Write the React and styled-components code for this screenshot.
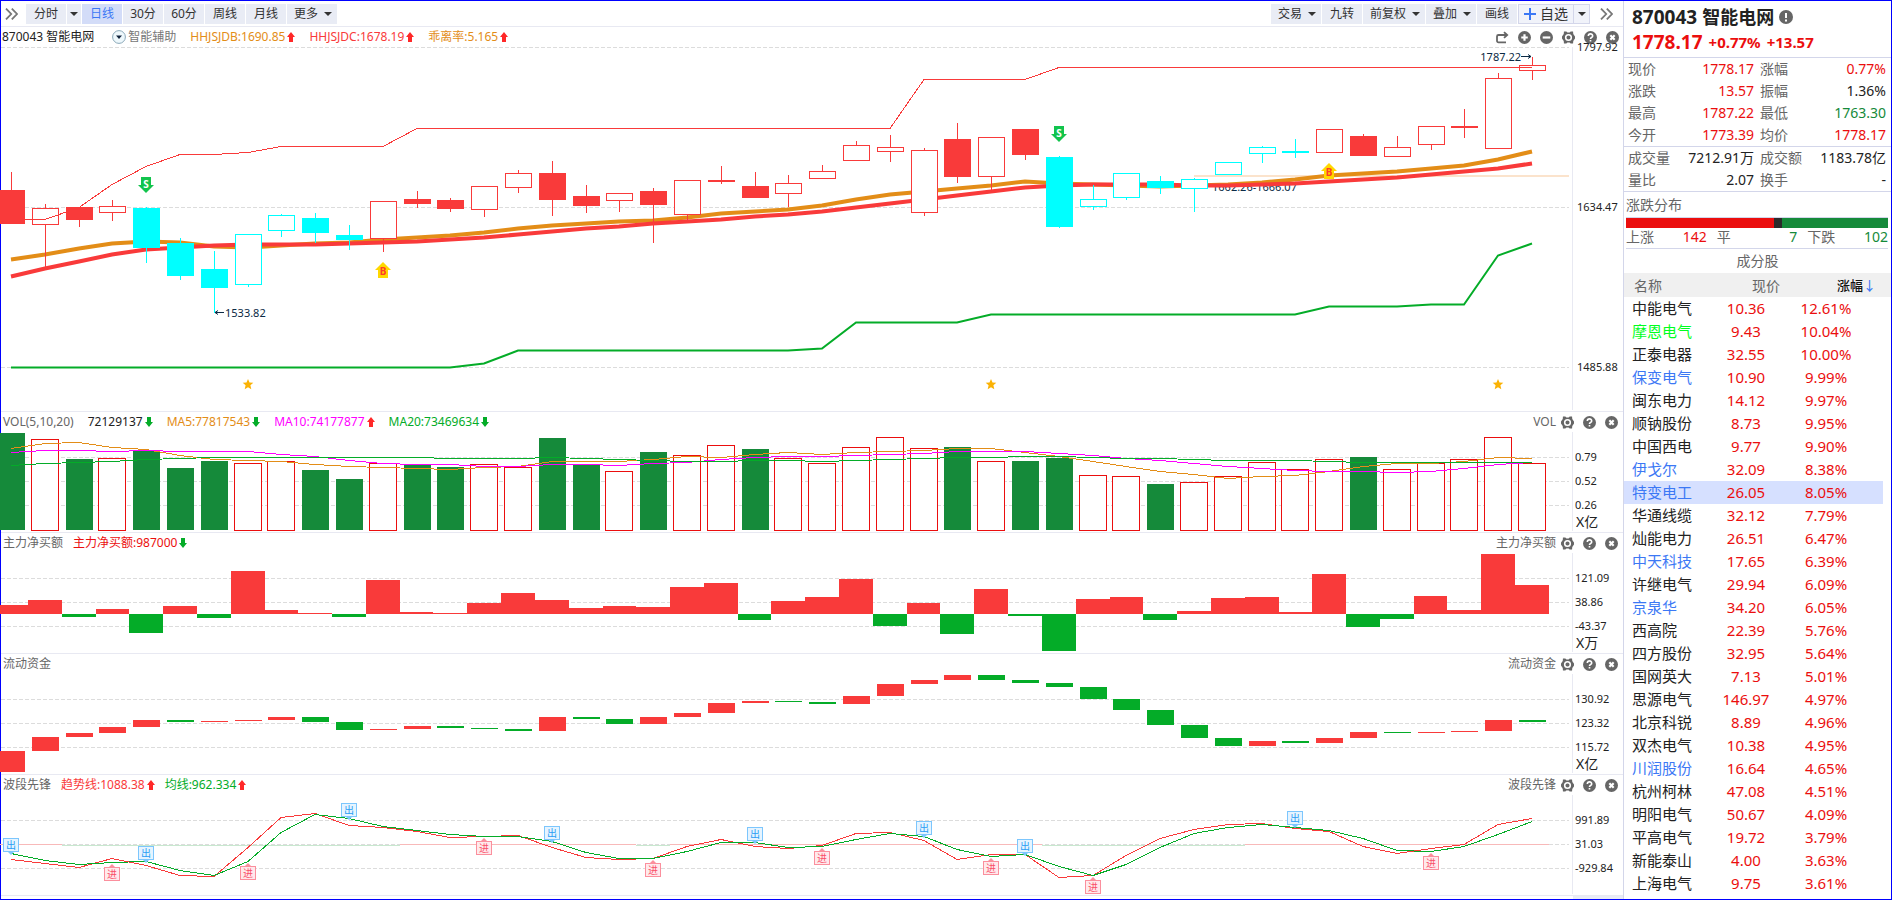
import React, { useLayoutEffect, useRef, useState } from 'react';
import styled, { createGlobalStyle } from 'styled-components';

const RED = '#f93a3a';
const DEEP_RED = '#eb0e0e';
const GREEN = '#04ac28';
const DEEP_GREEN = '#158a3a';
const CYAN = '#00ffff';
const ORANGE = '#e38d17';
const MAGENTA = '#ff00ff';
const AXIS_SPACE = 51;
const FIRST_X = 10;

// [kind, body top, body bottom, high, low], r = red, c = cyan, capital = filled body
const candles = [
  ['R', 190, 224, 172, 224], ['r', 208, 225, 204, 267], ['R', 207, 220, 207, 227],
  ['r', 206, 213, 200, 221], ['C', 208, 248, 207, 263], ['C', 243, 276, 238, 280],
  ['C', 269, 288, 251, 313], ['c', 234, 285, 234, 287], ['c', 215, 231, 214, 237],
  ['C', 218, 233, 213, 243], ['C', 235, 240, 225, 250], ['r', 201, 239, 201, 252],
  ['R', 199, 204, 191, 208], ['R', 200, 209, 198, 212], ['r', 186, 210, 186, 217],
  ['r', 173, 188, 170, 193], ['R', 173, 200, 161, 216], ['R', 196, 206, 185, 213],
  ['r', 193, 201, 193, 212], ['R', 191, 205, 188, 243], ['r', 180, 215, 180, 220],
  ['R', 180, 182, 166, 184], ['R', 186, 198, 172, 198], ['r', 183, 194, 175, 207],
  ['r', 171, 179, 165, 179], ['r', 145, 161, 141, 161], ['r', 147, 152, 135, 162],
  ['r', 150, 213, 148, 216], ['R', 139, 177, 123, 183], ['r', 137, 177, 137, 190],
  ['R', 129, 155, 129, 160], ['C', 157, 227, 156, 228], ['c', 199, 207, 185, 210],
  ['c', 173, 198, 173, 200], ['C', 181, 188, 176, 194], ['c', 179, 189, 178, 212],
  ['c', 162, 175, 162, 175], ['c', 147, 154, 146, 163], ['C', 151, 153, 139, 158],
  ['r', 129, 153, 129, 153], ['R', 136, 156, 134, 156], ['r', 147, 157, 136, 157],
  ['r', 126, 145, 126, 150], ['R', 126, 128, 109, 138], ['r', 78, 149, 73, 149],
  ['r', 65, 71, 57, 80],
];

const upperBand = [
  219, 219, 207, 184, 166, 154, 154, 152, 146, 146, 146, 146, 128, 128, 128, 128, 128, 128, 128,
  128, 128, 128, 128, 128, 128, 128, 128, 79, 79, 79, 79, 67, 67, 67, 67, 67, 67, 67, 67, 67, 67,
  67, 67, 67, 67, 67,
];
const lowerBand = [
  367, 367, 367, 367, 367, 367, 367, 367, 367, 367, 367, 367, 367, 367, 363, 350, 350, 350, 350,
  350, 350, 350, 350, 350, 348, 322, 322, 322, 322, 314, 314, 314, 314, 314, 314, 314, 314, 314,
  314, 306, 306, 306, 304, 304, 255, 243,
];
const trendFast = [
  259, 254, 248, 243, 241, 242, 246, 247, 245, 243, 242, 239, 237, 235, 232, 228, 225, 223, 221,
  220, 217, 213, 211, 209, 205, 199, 194, 191, 188, 185, 181, 183, 184, 185, 186, 185, 184, 182,
  179, 175, 173, 171, 168, 165, 159, 151,
];
const trendSlow = [
  276, 268, 261, 254, 249, 247, 245, 244, 244, 244, 243, 242, 241, 239, 237, 234, 231, 228, 226,
  223, 221, 219, 216, 214, 211, 207, 203, 199, 195, 191, 187, 185, 184, 184, 184, 185, 185, 184,
  183, 181, 179, 177, 174, 171, 168, 163,
];

const volumes = [
  ['g', 1], ['r', 7], ['g', 27], ['r', 26], ['g', 19], ['g', 36], ['g', 29], ['r', 31],
  ['r', 29], ['g', 38], ['g', 47], ['r', 31], ['g', 33], ['g', 35], ['r', 32], ['r', 35],
  ['g', 6], ['g', 33], ['r', 39], ['g', 20], ['r', 23], ['r', 13], ['g', 17], ['r', 26],
  ['r', 31], ['r', 15], ['r', 5], ['r', 16], ['g', 15], ['r', 29], ['g', 29], ['g', 26],
  ['r', 43], ['r', 44], ['g', 52], ['r', 50], ['r', 44], ['r', 30], ['r', 37], ['r', 27],
  ['g', 25], ['r', 37], ['r', 31], ['r', 27], ['r', 5], ['r', 31],
];
const ma5 = [
  16, 11, 10, 15, 17, 23, 27, 28, 29, 32, 34, 35, 36, 37, 35, 34, 29, 29, 29, 27, 24, 25, 22, 20,
  22, 20, 19, 18, 16, 16, 20, 24, 29, 34, 39, 42, 46, 44, 43, 39, 34, 31, 31, 29, 25, 26,
];
const ma10 = [
  20, 18, 18, 19, 18, 19, 19, 19, 22, 24, 28, 31, 32, 32, 34, 34, 32, 32, 33, 31, 30, 27, 25, 24,
  24, 23, 22, 21, 19, 19, 19, 21, 23, 26, 28, 31, 34, 36, 38, 39, 39, 40, 39, 36, 32, 30,
];
const ma20 = [
  33, 31, 30, 29, 27, 26, 25, 25, 25, 25, 25, 25, 25, 26, 26, 26, 25, 26, 27, 28, 29, 29, 28, 28,
  29, 28, 27, 26, 25, 25, 24, 24, 25, 26, 26, 27, 28, 28, 28, 29, 30, 30, 30, 30, 30, 30,
];

const netBuys = [
  9, 14, -3, 5, -19, 8, -4, 43, 4, 1, -3, 34, 2, 1, 11, 21, 14, 6, 8, 7, 27, 31, -6, 13, 17, 35,
  -12, 11, -20, 25, -2, -37, 15, 17, -6, 3, 16, 17, 2, 40, -13, -5, 18, 4, 60, 29,
];

const flows = [
  ['r', 77, 98], ['r', 63, 77], ['r', 59, 63], ['r', 53, 59], ['r', 46, 53], ['g', 46, 48],
  ['r', 47, 48], ['r', 46, 47], ['r', 43, 46], ['g', 43, 48], ['g', 48, 56], ['r', 55, 56],
  ['r', 52, 55], ['g', 52, 54], ['g', 54, 55], ['g', 55, 57], ['r', 43, 57], ['g', 43, 45],
  ['g', 45, 50], ['r', 43, 50], ['r', 39, 43], ['r', 29, 39], ['r', 27, 29], ['g', 27, 28],
  ['g', 28, 30], ['r', 22, 30], ['r', 10, 22], ['r', 6, 10], ['r', 1, 6], ['g', 1, 6],
  ['g', 6, 9], ['g', 9, 13], ['g', 13, 25], ['g', 25, 36], ['g', 36, 51], ['g', 51, 64],
  ['g', 64, 72], ['r', 67, 72], ['g', 67, 69], ['r', 64, 69], ['r', 58, 64], ['g', 58, 59],
  ['r', 58, 59], ['r', 57, 58], ['r', 46, 57], ['g', 46, 48],
];

const waveTrend = [
  64, 68, 72, 63, 70, 80, 81, 52, 22, 18, 30, 32, 36, 42, 41, 40, 52, 62, 64, 63, 51, 44, 51, 53,
  50, 38, 37, 45, 64, 59, 59, 82, 80, 60, 43, 34, 29, 28, 33, 36, 51, 58, 53, 49, 29, 23,
];
const waveMean = [
  58, 65, 69, 67, 66, 75, 80, 66, 37, 19, 23, 31, 35, 39, 41, 41, 46, 57, 63, 63, 56, 47, 47, 52,
  51, 44, 38, 41, 54, 61, 59, 71, 80, 69, 52, 38, 32, 29, 32, 35, 43, 55, 56, 51, 39, 26,
];
const zeroRuns = [
  [-1, 1.5, 'up'], [1.5, 11.5, 'down'], [11.5, 18.5, 'up'], [18.5, 19.5, 'down'],
  [19.5, 30.5, 'up'], [30.5, 36.5, 'down'], [36.5, 45.5, 'up'],
];
const exits = [[0, 43], [4, 51], [10, 8], [16, 31], [22, 32], [27, 26], [30, 44], [38, 16]];
const entries = [[3, 72], [7, 71], [14, 46], [19, 68], [24, 56], [29, 66], [32, 85], [42, 61]];

const quotes = [
  [['现价', '1778.17', 'up'], ['涨幅', '0.77%', 'up']],
  [['涨跌', '13.57', 'up'], ['振幅', '1.36%']],
  [['最高', '1787.22', 'up'], ['最低', '1763.30', 'down']],
  [['今开', '1773.39', 'up'], ['均价', '1778.17', 'up']],
];
const turnover = [
  [['成交量', '7212.91万'], ['成交额', '1183.78亿']],
  [['量比', '2.07'], ['换手', '-']],
];

const stocks = [
  ['中能电气', '10.36', '12.61%'],
  ['摩恩电气', '9.43', '10.04%', 'lime'],
  ['正泰电器', '32.55', '10.00%'],
  ['保变电气', '10.90', '9.99%', 'blue'],
  ['闽东电力', '14.12', '9.97%'],
  ['顺钠股份', '8.73', '9.95%'],
  ['中国西电', '9.77', '9.90%'],
  ['伊戈尔', '32.09', '8.38%', 'blue'],
  ['特变电工', '26.05', '8.05%', 'blue', true],
  ['华通线缆', '32.12', '7.79%'],
  ['灿能电力', '26.51', '6.47%'],
  ['中天科技', '17.65', '6.39%', 'blue'],
  ['许继电气', '29.94', '6.09%'],
  ['京泉华', '34.20', '6.05%', 'blue'],
  ['西高院', '22.39', '5.76%'],
  ['四方股份', '32.95', '5.64%'],
  ['国网英大', '7.13', '5.01%'],
  ['思源电气', '146.97', '4.97%'],
  ['北京科锐', '8.89', '4.96%'],
  ['双杰电气', '10.38', '4.95%'],
  ['川润股份', '16.64', '4.65%', 'blue'],
  ['杭州柯林', '47.08', '4.51%'],
  ['明阳电气', '50.67', '4.09%'],
  ['平高电气', '19.72', '3.79%'],
  ['新能泰山', '4.00', '3.63%'],
  ['上海电气', '9.75', '3.61%'],
];

const nameColors = { lime: '#00ff1e', blue: '#3c78f5' };
const valueColors = { up: DEEP_RED, down: DEEP_GREEN };

/* ---------- icons ---------- */

const Caret = () => (
  <svg width="8" height="4" viewBox="0 0 8 4">
    <path d="M0 0h8L4 4z" fill="#333" />
  </svg>
);

const DoubleChevron = () => (
  <svg width="13" height="12" viewBox="0 0 13 12" fill="none" stroke="#777" strokeWidth="1.8">
    <path d="M1 .6L6.200 6 1 11.400M6.800 .6L12 6l-5.200 5.400" />
  </svg>
);

const Trend = ({ down }) => (
  <svg width="8" height="10" viewBox="0 0 8 10">
    {down ? (
      <path d="M2 0h4v5h2L4 10 0 5h2z" fill={GREEN} />
    ) : (
      <path d="M4 0l4 5H6v5H2V5H0z" fill="#ff2828" />
    )}
  </svg>
);

const Dropper = () => (
  <svg width="14" height="14" viewBox="0 0 14 14">
    <circle cx="7" cy="7" r="6.400" fill="#eef8fc" stroke="#8aa8b8" />
    <path d="M4 5.500h6L7 9z" fill="#10233c" />
  </svg>
);

const Redo = () => (
  <svg width="13" height="13" viewBox="0 0 13 12" fill="none" stroke="#666" strokeWidth="1.800">
    <path d="M10 10.800H2.500a1.500 1.500 0 0 1-1.500-1.500V5a1.500 1.500 0 0 1 1.500-1.500H11M8 .6l3.200 2.900L8 6.400" />
  </svg>
);

const Disc = ({ children }) => (
  <svg width="13" height="13" viewBox="0 0 12 12" fill="none" stroke="#fff" strokeWidth="2">
    <circle cx="6" cy="6" r="6" fill="#666" stroke="none" />
    {children}
  </svg>
);

const Plus = () => <Disc><path d="M6 3v6M3 6h6" /></Disc>;
const Minus = () => <Disc><path d="M2.500 6h7" /></Disc>;
const Cross = () => <Disc><path d="M4 4l4 4M8 4L4 8" /></Disc>;
const Help = () => (
  <Disc>
    <path d="M4 4.600C4 2 8 2 8 4.500 8 6 6 5.800 6 7.400M6 8.400v1.400" strokeWidth="1.500" />
  </Disc>
);
const Gear = () => (
  <svg width="13" height="13" viewBox="0 0 12 12">
    <path
      d="M1.800 .5h2.200L5 1.300h2L8 .5h2.200l.2 2.300L12 5v2l-1.600 2.200-.2 2.300H8l-1-.8H5l-1 .8H1.800l-.2-2.300L0 7V5l1.600-2.200z"
      fill="#666"
    />
    <circle cx="6" cy="6" r="2.600" fill="#666" stroke="#fff" strokeWidth="1.400" />
  </svg>
);

const Alert = () => (
  <svg width="14" height="14" viewBox="0 0 14 14">
    <circle cx="7" cy="7" r="7" fill="#666" />
    <path d="M7 3v5M7 9.400v2" stroke="#fff" strokeWidth="2" />
  </svg>
);

/* ---------- chart parts ---------- */

const Plot = ({ height, grid, labels, unit, labelX = 3, children }) => {
  const ref = useRef(null);
  const [width, setWidth] = useState(1622);

  useLayoutEffect(() => {
    const measure = () => setWidth(ref.current.clientWidth);
    measure();
    const observer = new ResizeObserver(measure);
    observer.observe(ref.current);
    return () => observer.disconnect();
  }, []);

  const plotWidth = width - AXIS_SPACE;
  const step = (plotWidth - 50) / 45;
  const x = i => Math.round(FIRST_X + i * step);

  return (
    <PlotBox ref={ref}>
      <PlotSvg width={width} height={height}>
        {grid.map(y => (
          <GridLine key={y} x1="0" x2={plotWidth - 3} y1={y + 0.5} y2={y + 0.5} />
        ))}
        {children(x, step, plotWidth)}
        <AxisLine x1={plotWidth + 0.5} x2={plotWidth + 0.5} y1="0" y2={height - 1} />
        {labels.map((label, i) => (
          <AxisText key={label} x={plotWidth + labelX} y={grid[i] + 4}>
            {label}
          </AxisText>
        ))}
        {unit && (
          <UnitText x={plotWidth + 4} y={height - 5}>
            {unit}
          </UnitText>
        )}
      </PlotSvg>
    </PlotBox>
  );
};

const Line = ({ values, x, color, width = 1, smooth }) => (
  <polyline
    points={values.map((v, i) => `${x(i)},${v + 0.5}`).join(' ')}
    fill="none"
    stroke={color}
    strokeWidth={width}
    shapeRendering={smooth ? 'auto' : 'crispEdges'}
  />
);

const Candle = ({ data, cx }) => {
  const [kind, top, bottom, high, low] = data;
  const color = kind.toLowerCase() === 'r' ? RED : CYAN;
  const filled = kind === 'R' || kind === 'C';
  return (
    <g stroke={color} shapeRendering="crispEdges">
      <path d={`M${cx + 0.5} ${high}V${top}M${cx + 0.5} ${bottom}V${low}`} />
      <rect
        x={cx - 12.5}
        y={top + 0.5}
        width="26"
        height={bottom - top - 1}
        fill={filled ? color : '#fff'}
      />
    </g>
  );
};

const SellMark = ({ cx, y }) => (
  <g>
    <path d={`M${cx - 5} ${y}h10v8h3l-8 8-8-8h3z`} fill="#12c44d" />
    <MarkText x={cx} y={y + 11} fill="#fff">S</MarkText>
  </g>
);

const BuyMark = ({ cx, y }) => (
  <g>
    <path d={`M${cx} ${y}l8 8h-3v8h-10v-8h-3z`} fill="#ffd800" />
    <MarkText x={cx} y={y + 13} fill="#ff3c28">B</MarkText>
  </g>
);

const Star = ({ cx }) => (
  <path
    d={`M${cx} 379l1.500 3.500 3.800.3-2.900 2.500.9 3.900-3.300-2-3.300 2 .9-3.900-2.900-2.500 3.800-.3z`}
    fill="#fbb204"
  />
);

const Tag = ({ cx, y, text, entry }) => {
  const stroke = entry ? '#fb8f9d' : '#7cc6fd';
  return (
    <g>
      <path
        d={entry ? `M${cx - 3} ${y}l3-3 3 3z` : `M${cx - 3} ${y + 14}l3 3 3-3z`}
        fill={stroke}
      />
      <rect
        x={cx - 7.5}
        y={y + 0.5}
        width="15"
        height="13"
        fill={entry ? '#ffe9ec' : '#e6f4ff'}
        stroke={stroke}
      />
      <TagText x={cx} y={y + 11} fill={entry ? '#f94f68' : '#2b9df4'}>
        {text}
      </TagText>
    </g>
  );
};

const Tools = ({ name, full }) => (
  <ToolGroup>
    {name && <span>{name}</span>}
    {full && <IconButton aria-label="重置"><Redo /></IconButton>}
    {full && <IconButton aria-label="放大"><Plus /></IconButton>}
    {full && <IconButton aria-label="缩小"><Minus /></IconButton>}
    <IconButton aria-label="设置"><Gear /></IconButton>
    <IconButton aria-label="帮助"><Help /></IconButton>
    <IconButton aria-label="关闭"><Cross /></IconButton>
  </ToolGroup>
);

const Reading = ({ color, down, children }) => (
  <ReadingText $color={color}>
    {children}
    <Trend down={down} />
  </ReadingText>
);

/* ---------- panels ---------- */

const PricePanel = () => (
  <section>
    <PanelHeader $main $gap={14}>
      <SymbolName>870043 智能电网</SymbolName>
      <Assist type="button">
        <Dropper />
        智能辅助
      </Assist>
      <Reading color={ORANGE}>HHJSJDB:1690.85</Reading>
      <Reading color={RED}>HHJSJDC:1678.19</Reading>
      <Reading color={ORANGE}>乖离率:5.165</Reading>
      <Tools full />
    </PanelHeader>
    <Plot
      height={364}
      grid={[0, 160, 320]}
      labels={['1797.92', '1634.47', '1485.88']}
      labelX={5}
    >
      {(x, step, plotWidth) => (
        <g transform="translate(0 -47)">
          <line x1={x(35)} x2={plotWidth - 3} y1="176" y2="176" stroke="#fbe3cc" strokeWidth="2" />
          <NoteText x={x(35) + 18} y="191">1662.26-1666.07</NoteText>
          <Line values={trendFast} x={x} color={ORANGE} width={4} smooth />
          <Line values={trendSlow} x={x} color={RED} width={4} smooth />
          <Line values={lowerBand} x={x} color={GREEN} width={2} smooth />
          {candles.map((candle, i) => (
            <Candle key={i} data={candle} cx={x(i)} />
          ))}
          <Line values={upperBand} x={x} color={RED} />
          <SellMark cx={x(4)} y={177} />
          <SellMark cx={x(31)} y={126} />
          <BuyMark cx={x(11)} y={262} />
          <BuyMark cx={x(39)} y={163} />
          <Star cx={x(7)} />
          <Star cx={x(29)} />
          <Star cx={x(44)} />
          <g stroke="#0b2a45" fill="none">
            <path d={`M${x(6) + 10} 312.500h-9m3-2l-3 2 3 2`} />
            <path d={`M${x(45) - 11} 56.500h10m-3-2l3 2-3 2`} />
          </g>
          <NoteText x={x(6) + 11} y="317">1533.82</NoteText>
          <NoteText x={x(45) - 11} y="61" textAnchor="end">1787.22</NoteText>
        </g>
      )}
    </Plot>
  </section>
);

const VolumePanel = () => (
  <Panel>
    <PanelHeader $gap={14}>
      <PanelName>VOL(5,10,20)</PanelName>
      <Reading color="#222" down>72129137</Reading>
      <Reading color={ORANGE} down>MA5:77817543</Reading>
      <Reading color={MAGENTA}>MA10:74177877</Reading>
      <Reading color={GREEN} down>MA20:73469634</Reading>
      <Tools name="VOL" />
    </PanelHeader>
    <Plot height={100} grid={[25, 49, 73]} labels={['0.79', '0.52', '0.26']} unit="X亿">
      {x => (
        <g>
          {volumes.map(([kind, top], i) =>
            kind === 'g' ? (
              <rect key={i} x={x(i) - 13} y={top} width="27" height={98 - top} fill={DEEP_GREEN} />
            ) : (
              <rect
                key={i}
                x={x(i) - 13.5}
                y={top + 0.5}
                width="27"
                height={98 - top}
                fill="#fff"
                stroke={DEEP_RED}
              />
            )
          )}
          <Line values={ma5} x={x} color={ORANGE} />
          <Line values={ma10} x={x} color={MAGENTA} />
          <Line values={ma20} x={x} color={GREEN} />
        </g>
      )}
    </Plot>
  </Panel>
);

const NetBuyPanel = () => (
  <Panel>
    <PanelHeader $gap={10}>
      <PanelName>主力净买额</PanelName>
      <Reading color={DEEP_RED} down>主力净买额:987000</Reading>
      <Tools name="主力净买额" />
    </PanelHeader>
    <Plot height={100} grid={[25, 49, 73]} labels={['121.09', '38.86', '-43.37']} unit="X万">
      {(x, step) =>
        netBuys.map((value, i) => {
          const left = Math.round(FIRST_X + (i - 0.5) * step);
          const right = Math.round(FIRST_X + (i + 0.5) * step);
          return (
            <rect
              key={i}
              x={left}
              y={value > 0 ? 61 - value : 61}
              width={right - left}
              height={Math.abs(value)}
              fill={value > 0 ? RED : GREEN}
            />
          );
        })
      }
    </Plot>
  </Panel>
);

const FlowPanel = () => (
  <Panel>
    <PanelHeader $gap={10}>
      <PanelName>流动资金</PanelName>
      <Tools name="流动资金" />
    </PanelHeader>
    <Plot height={100} grid={[25, 49, 73]} labels={['130.92', '123.32', '115.72']} unit="X亿">
      {x =>
        flows.map(([kind, top, bottom], i) => (
          <rect
            key={i}
            x={x(i) - 13}
            y={top}
            width="27"
            height={bottom - top}
            fill={kind === 'r' ? RED : GREEN}
          />
        ))
      }
    </Plot>
  </Panel>
);

const WavePanel = () => (
  <Panel $last>
    <PanelHeader $gap={10}>
      <PanelName>波段先锋</PanelName>
      <Reading color={RED}>趋势线:1088.38</Reading>
      <Reading color={GREEN}>均线:962.334</Reading>
      <Tools name="波段先锋" />
    </PanelHeader>
    <Plot height={100} grid={[25, 49, 73]} labels={['991.89', '31.03', '-929.84']}>
      {x => (
        <g>
          {zeroRuns.map(([from, to, dir]) => (
            <line
              key={from}
              x1={x(from)}
              x2={x(to)}
              y1={dir === 'up' ? 49.5 : 50.5}
              y2={dir === 'up' ? 49.5 : 50.5}
              stroke={dir === 'up' ? '#f8b9b9' : '#c8e8cf'}
            />
          ))}
          <Line values={waveTrend} x={x} color={RED} />
          <Line values={waveMean} x={x} color={GREEN} />
          {exits.map(([i, y]) => (
            <Tag key={i} cx={x(i)} y={y} text="出" />
          ))}
          {entries.map(([i, y]) => (
            <Tag key={i} cx={x(i)} y={y} text="进" entry />
          ))}
        </g>
      )}
    </Plot>
  </Panel>
);

const QuoteGrid = ({ rows }) => (
  <QuoteList>
    {rows.flat().map(([label, value, dir]) => (
      <QuoteItem key={label}>
        <dt>{label}</dt>
        <QuoteValue $dir={dir}>{value}</QuoteValue>
      </QuoteItem>
    ))}
  </QuoteList>
);

const Sidebar = () => (
  <Side>
    <SideTitle>
      <Heading>
        <Code>870043</Code>
        智能电网
        <Alert />
      </Heading>
      <PriceLine>
        <Code>1778.17</Code>
        <span>+0.77%</span>
        <span>+13.57</span>
      </PriceLine>
    </SideTitle>
    <QuoteGrid rows={quotes} />
    <QuoteGrid rows={turnover} />
    <Spread>
      <SpreadTitle>涨跌分布</SpreadTitle>
      <SpreadBar>
        <SpreadPart $share={142} $color={DEEP_RED} />
        <SpreadPart $share={7} $color="#2b2b2b" />
        <SpreadPart $share={102} $color={DEEP_GREEN} />
      </SpreadBar>
      <SpreadCounts>
        <SpreadCount $color={DEEP_RED}><dt>上涨</dt><dd>142</dd></SpreadCount>
        <SpreadCount $color={DEEP_GREEN}><dt>平</dt><dd>7</dd></SpreadCount>
        <SpreadCount $color={DEEP_GREEN}><dt>下跌</dt><dd>102</dd></SpreadCount>
      </SpreadCounts>
    </Spread>
    <ListTitle>成分股</ListTitle>
    <StockTable>
      <colgroup>
        <Col $width={80} />
        <Col $width={84} />
        <Col $width={76} />
        <Col $width={19} />
        <col />
      </colgroup>
      <thead>
        <tr>
          <th>名称</th>
          <th>现价</th>
          <SortedHead colSpan="3">涨幅<i>↓</i></SortedHead>
        </tr>
      </thead>
      <tbody>
        {stocks.map(([name, price, change, tone, active]) => (
          <StockRow key={name} $active={active}>
            <StockName $tone={tone}>{name}</StockName>
            <td>{price}</td>
            <td>{change}</td>
            <td />
            <td />
          </StockRow>
        ))}
      </tbody>
    </StockTable>
  </Side>
);

const App = () => (
  <Page>
    <GlobalStyle />
    <Charts>
      <Toolbar>
        <MoreButton aria-label="展开"><DoubleChevron /></MoreButton>
        <TabButton>分时</TabButton>
        <TabButton $slim aria-label="分时选项"><Caret /></TabButton>
        <TabButton $active>日线</TabButton>
        <TabButton>30分</TabButton>
        <TabButton>60分</TabButton>
        <TabButton>周线</TabButton>
        <TabButton>月线</TabButton>
        <TabButton $menu>更多<Caret /></TabButton>
        <Spacer />
        <TabButton $menu>交易<Caret /></TabButton>
        <TabButton>九转</TabButton>
        <TabButton $menu>前复权<Caret /></TabButton>
        <TabButton $menu>叠加<Caret /></TabButton>
        <TabButton>画线</TabButton>
        <WatchGroup>
          <WatchButton>
            <svg width="12" height="12" viewBox="0 0 12 12">
              <path d="M6 0v12M0 6h12" stroke="#3c78f5" strokeWidth="2" />
            </svg>
            自选
          </WatchButton>
          <WatchButton $slim aria-label="自选分组"><Caret /></WatchButton>
        </WatchGroup>
        <MoreButton $end aria-label="收起"><DoubleChevron /></MoreButton>
      </Toolbar>
      <PricePanel />
      <VolumePanel />
      <NetBuyPanel />
      <FlowPanel />
      <WavePanel />
      <TimeAxis><TimeCorner /></TimeAxis>
    </Charts>
    <Sidebar />
  </Page>
);

export default App;

const GlobalStyle = createGlobalStyle`
  * {
    box-sizing: border-box;
  }

  body {
    margin: 0;
    background: #fff;
    color: #222;
    font-family: 'Noto Sans', 'Noto Sans CJK SC', sans-serif;
    font-size: 12px;
    line-height: 20px;
  }

  button {
    border: 0;
    padding: 0;
    background: none;
    color: inherit;
    font: inherit;
    cursor: pointer;
  }

  svg {
    display: block;
    flex: none;
  }

  dl, dd, h1, h2 {
    margin: 0;
  }
`;

const Page = styled.div`
  display: grid;
  grid-template-columns: minmax(0, 1fr) 268px;
  min-height: 100vh;
  border: 1px solid #0000ff;
`;

const Charts = styled.main`
  min-width: 0;
`;

const Toolbar = styled.nav`
  display: flex;
  align-items: center;
  gap: 1px;
  height: 26px;
  padding-top: 1px;
  border-bottom: 1px solid #e8e9f2;
`;

const TabButton = styled.button`
  display: flex;
  align-items: center;
  justify-content: center;
  gap: 6px;
  width: ${props => (props.$slim ? '14px' : props.$menu ? 'auto' : '40px')};
  height: 20px;
  padding: ${props => (props.$menu ? '0 5px 0 7px' : '0')};
  background: ${props => (props.$active ? '#d3dcf8' : '#e9ecf5')};
  color: ${props => (props.$active ? '#3c78f5' : '#333')};
  white-space: nowrap;
`;

const MoreButton = styled.button`
  display: flex;
  justify-content: center;
  width: ${props => (props.$end ? '32px' : '24px')};
  padding-right: ${props => (props.$end ? '2px' : '4px')};
`;

const Spacer = styled.div`
  flex: 1;
`;

const WatchGroup = styled.div`
  display: flex;
  height: 20px;
  border: 1px solid #d3d6ea;
  background: #f1f3fa;
`;

const WatchButton = styled.button`
  display: flex;
  align-items: center;
  justify-content: center;
  gap: 4px;
  width: ${props => (props.$slim ? '16px' : '54px')};
  border-left: ${props => (props.$slim ? '1px solid #d3d6ea' : '0')};
  color: #333;
  font-size: 14px;
  line-height: 18px;
`;

const Panel = styled.section`
  border-top: 1px solid #e8e9f2;
  border-bottom: ${props => (props.$last ? '1px solid #e8e9f2' : '0')};
`;

const PanelHeader = styled.header`
  display: flex;
  align-items: center;
  gap: ${props => props.$gap}px;
  height: 20px;
  padding: 0 ${props => (props.$main ? '4px 0 1px' : '5px 0 2px')};
  white-space: nowrap;
`;

const PanelName = styled.h2`
  color: #666;
  font-size: 12px;
  font-weight: 400;
`;

const SymbolName = styled.h2`
  font-size: 12px;
  font-weight: 400;
`;

const Assist = styled.button`
  display: flex;
  align-items: center;
  gap: 2px;
  margin-left: 4px;
  color: #777;
`;

const ReadingText = styled.span`
  display: flex;
  align-items: center;
  gap: 2px;
  color: ${props => props.$color};
`;

const ToolGroup = styled.div`
  display: flex;
  align-items: center;
  gap: 9px;
  margin-left: auto;
  color: #666;

  span {
    margin-right: -4px;
  }
`;

const IconButton = styled.button`
  display: flex;
  justify-content: center;
  width: 13px;
  height: 13px;
`;

const PlotBox = styled.div`
  min-width: 0;
`;

const PlotSvg = styled.svg`
  overflow: visible;
`;

const GridLine = styled.line`
  stroke: #dcdcdc;
  stroke-dasharray: 4 2;
`;

const AxisLine = styled.line`
  stroke: #e8e9f2;
`;

const AxisText = styled.text`
  fill: #222;
  font-size: 11px;
`;

const UnitText = styled.text`
  fill: #222;
  font-size: 14px;
`;

const NoteText = styled.text`
  fill: #0b2a45;
  font-size: 11px;
`;

const MarkText = styled.text`
  font-size: 10px;
  font-weight: 700;
  text-anchor: middle;
`;

const TagText = styled.text`
  font-size: 10px;
  text-anchor: middle;
`;

const TimeAxis = styled.footer`
  display: flex;
  justify-content: flex-end;
`;

const TimeCorner = styled.div`
  width: 50px;
  height: 3px;
  background: #e9ecf5;
`;

const Side = styled.aside`
  border-left: 1px solid #d3d6ea;
`;

const SideTitle = styled.div`
  padding: 2px 8px 3px;
`;

const Heading = styled.h1`
  display: flex;
  align-items: center;
  gap: 5px;
  font-size: 18px;
  font-weight: 700;
  line-height: 28px;
`;

const Code = styled.span`
  font-size: 19px;
`;

const PriceLine = styled.div`
  display: flex;
  align-items: center;
  gap: 6px;
  color: ${DEEP_RED};
  font-size: 15px;
  font-weight: 700;
  line-height: 23px;
`;

const QuoteList = styled.dl`
  display: grid;
  grid-template-columns: 126px 1fr;
  column-gap: 6px;
  padding: 0 5px 0 4px;
  border-top: 1px solid #d3d6ea;
  font-size: 14px;
  line-height: 22px;
`;

const QuoteItem = styled.div`
  display: flex;
  justify-content: space-between;
  color: #666;
`;

const QuoteValue = styled.dd`
  color: ${props => valueColors[props.$dir] || '#222'};
`;

const Spread = styled.section`
  padding: 0 3px 0 2px;
  border-top: 1px solid #d3d6ea;
`;

const SpreadTitle = styled.h2`
  padding-top: 1px;
  color: #666;
  font-size: 14px;
  font-weight: 400;
  line-height: 24px;
`;

const SpreadBar = styled.div`
  display: flex;
  height: 11px;
  border-top: 1px solid #d3d6ea;
`;

const SpreadPart = styled.div`
  flex: ${props => props.$share};
  background: ${props => props.$color};
`;

const SpreadCounts = styled.dl`
  display: grid;
  grid-template-columns: repeat(3, 1fr);
  column-gap: 10px;
  padding-bottom: 2px;
  border-bottom: 1px solid #d3d6ea;
  font-size: 14px;
  line-height: 18px;
`;

const SpreadCount = styled.div`
  display: flex;
  justify-content: space-between;
  color: #666;

  dd {
    color: ${props => props.$color};
  }
`;

const ListTitle = styled.h2`
  padding: 2px 0;
  color: #666;
  font-size: 14px;
  font-weight: 400;
  line-height: 20px;
  text-align: center;
`;

const Col = styled.col`
  width: ${props => props.$width}px;
`;

const StockTable = styled.table`
  width: 100%;
  border-collapse: collapse;
  table-layout: fixed;
  font-size: 15px;
  line-height: 23px;

  thead tr {
    height: 24px;
    background: #f0f0f0;
  }

  th {
    padding: 0;
    color: #666;
    font-size: 14px;
    font-weight: 400;
    white-space: nowrap;
  }

  th:first-child {
    padding-left: 10px;
    text-align: left;
  }

  th:nth-child(2) {
    padding-left: 40px;
  }

  td {
    height: 23px;
    padding: 0;
    text-align: center;
  }
`;

const SortedHead = styled.th`
  && {
    padding-left: 49px;
    color: #111;
    font-size: 13px;
    font-weight: 500;
    text-align: left;
  }

  i {
    color: #3c78f5;
    font-style: normal;
  }
`;

const StockRow = styled.tr`
  color: ${DEEP_RED};

  td:not(:last-child) {
    background: ${props => (props.$active ? '#d6e0ff' : 'transparent')};
  }
`;

const StockName = styled.td`
  && {
    padding-left: 8px;
    color: ${props => nameColors[props.$tone] || '#222'};
    text-align: left;
    white-space: nowrap;
  }
`;
